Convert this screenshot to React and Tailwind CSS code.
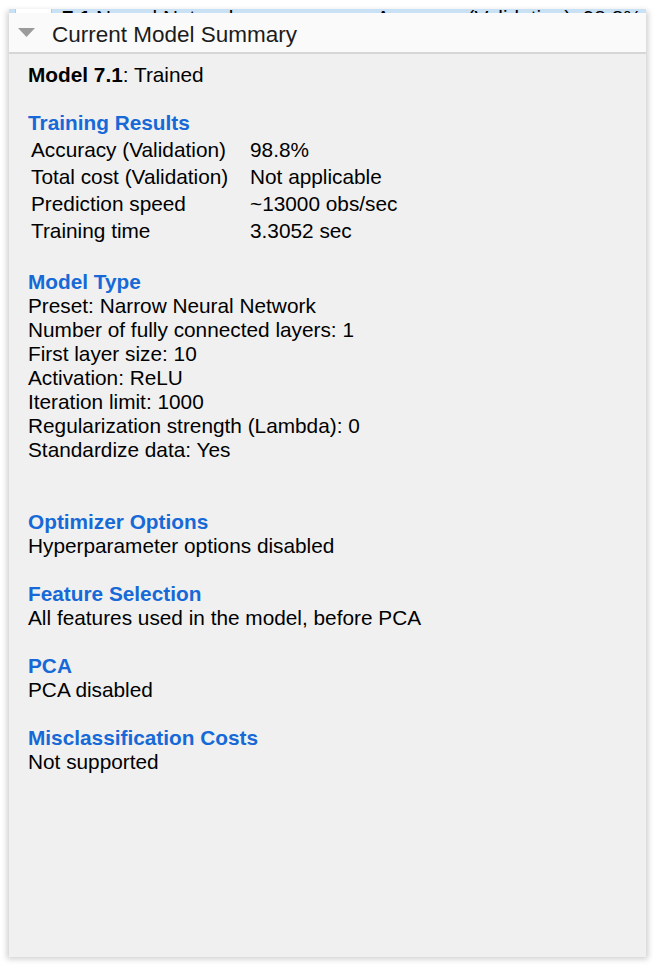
export default function App() {
  const font = { fontFamily: "'Liberation Sans', Arial, sans-serif" };

  const results = [
    ['Accuracy (Validation)', '98.8%'],
    ['Total cost (Validation)', 'Not applicable'],
    ['Prediction speed', '~13000 obs/sec'],
    ['Training time', '3.3052 sec'],
  ];

  const modelType = [
    'Preset: Narrow Neural Network',
    'Number of fully connected layers: 1',
    'First layer size: 10',
    'Activation: ReLU',
    'Iteration limit: 1000',
    'Regularization strength (Lambda): 0',
    'Standardize data: Yes',
  ];

  const sections = [
    ['Optimizer Options', 'Hyperparameter options disabled'],
    ['Feature Selection', 'All features used in the model, before PCA'],
    ['PCA', 'PCA disabled'],
    ['Misclassification Costs', 'Not supported'],
  ];

  return (
    <div
      className="w-[654px] h-[965px] bg-white overflow-hidden text-black"
      style={font}
    >
      {/* model list row peeking out behind the panel */}
      <div className="ml-[9px] w-[637px] h-[13px] flex flex-col">
        <div className="h-[9px]" />
        <div className="h-[4px] bg-[#c9e1f5] overflow-hidden relative">
          <div className="absolute left-[6px] top-0 w-[37px] h-[4px] bg-white border-x border-[#c8c8c8]" />
          <div className="flex items-start -mt-[3px] text-[20.8px] leading-[24px] whitespace-nowrap">
            <span className="ml-[53px] font-bold">7.1</span>
            <span className="ml-[5px]">Neural Network</span>
            <span className="ml-[137px]">Accuracy (Validation): 98.8%</span>
          </div>
        </div>
      </div>

      {/* panel */}
      <div className="ml-[9px] w-[637px] h-[944px] bg-[#f0f0f0] shadow-[0_0_6px_2px_rgba(0,0,0,0.2)] flex flex-col">
        <div className="h-[41px] bg-[#fafafa] border-b-2 border-[#d6d6d6] flex items-start pt-[11px]">
          <svg className="ml-[9px] mt-[4px]" width="17" height="9" viewBox="0 0 17 9">
            <path d="M0 0 H17 L8.5 9 Z" fill="#9b9b9b" />
          </svg>
          <span className="ml-[17px] text-[22.5px] leading-[22.5px] text-[#1c1c1c]">
            Current Model Summary
          </span>
        </div>

        <div className="pl-[19px] pt-[9px] text-[20.8px] leading-[24px]">
          <div>
            <span className="font-bold">Model 7.1</span>: Trained
          </div>

          <div className="mt-6 font-bold text-[#1669d6]">Training Results</div>
          <div className="ml-[3px] mt-[1px] flex flex-col">
            {results.map(([k, v]) => (
              <div key={k} className="flex h-[27px] items-center">
                <span className="w-[219px]">{k}</span>
                <span>{v}</span>
              </div>
            ))}
          </div>

          <div className="mt-[26px] font-bold text-[#1669d6]">Model Type</div>
          {modelType.map((l) => (
            <div key={l}>{l}</div>
          ))}

          <div className="mt-[48px] flex flex-col gap-6">
            {sections.map(([h, t]) => (
              <div key={h}>
                <div className="font-bold text-[#1669d6]">{h}</div>
                <div>{t}</div>
              </div>
            ))}
          </div>
        </div>
      </div>
    </div>
  );
}
